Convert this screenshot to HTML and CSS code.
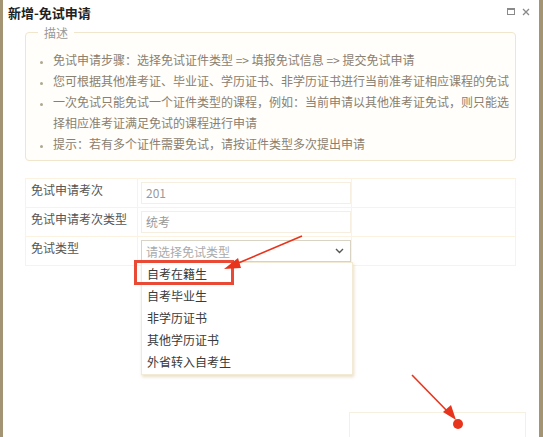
FILE: index.html
```html
<!DOCTYPE html>
<html lang="zh">
<head>
<meta charset="utf-8">
<title>新增-免试申请</title>
<link rel="stylesheet" href="styles.css">
</head>
<body>
<div class="window">
  <div class="titlebar">
    <span class="title">新增-免试申请</span>
    <span class="tools">
      <svg class="tool" width="8" height="8" viewBox="0 0 8 8"><rect x="0.5" y="0.5" width="7" height="6" fill="none" stroke="#8a8a8a" stroke-width="1"/><line x1="0.5" y1="1.5" x2="7.5" y2="1.5" stroke="#8a8a8a" stroke-width="1"/></svg>
      <svg class="tool" width="8" height="8" viewBox="0 0 8 8"><path d="M1 1 L7 7 M7 1 L1 7" stroke="#8a8a8a" stroke-width="1.3"/></svg>
    </span>
  </div>
  <div class="body">
    <fieldset class="desc">
      <legend>描述</legend>
      <ul>
        <li>免试申请步骤：选择免试证件类型 =&gt; 填报免试信息 =&gt; 提交免试申请</li>
        <li>您可根据其他准考证、毕业证、学历证书、非学历证书进行当前准考证相应课程的免试</li>
        <li>一次免试只能免试一个证件类型的课程，例如：当前申请以其他准考证免试，则只能选择相应准考证满足免试的课程进行申请</li>
        <li>提示：若有多个证件需要免试，请按证件类型多次提出申请</li>
      </ul>
    </fieldset>
    <div class="form">
      <div class="row">
        <div class="label">免试申请考次</div>
        <div class="value"><div class="input">201</div></div>
        <div class="extra"></div>
      </div>
      <div class="row">
        <div class="label">免试申请考次类型</div>
        <div class="value"><div class="input">统考</div></div>
        <div class="extra"></div>
      </div>
      <div class="row">
        <div class="label">免试类型</div>
        <div class="value">
          <div class="select">
            <span class="placeholder">请选择免试类型</span>
            <svg class="chev" width="9" height="6" viewBox="0 0 9 6"><path d="M1 1 L4.5 4.5 L8 1" fill="none" stroke="#555" stroke-width="1.4"/></svg>
          </div>
          <ul class="dropdown">
            <li>自考在籍生</li>
            <li>自考毕业生</li>
            <li>非学历证书</li>
            <li>其他学历证书</li>
            <li>外省转入自考生</li>
          </ul>
          <div class="highlight"></div>
        </div>
        <div class="extra"></div>
      </div>
    </div>
    <div class="footer">
      <div class="footbox"></div>
    </div>
  </div>
  <svg class="arrows" width="543" height="437" viewBox="0 0 543 437">
    <line x1="302" y1="236" x2="236" y2="264" stroke="#e8341c" stroke-width="1.6"/>
    <polygon points="224,269 238,258 241,268" fill="#e8341c"/>
    <line x1="412" y1="375" x2="450" y2="414" stroke="#e8341c" stroke-width="1.6"/>
    <polygon points="456,420 443,412 451,405" fill="#e8341c"/>
    <circle cx="458" cy="424" r="5" fill="#e8341c"/>
  </svg>
</div>
</body>
</html>
```
FILE: styles.css
```css
html, body {
  margin: 0;
  padding: 0;
  background: #fff;
}
body {
  font-family: "Noto Sans CJK SC", "Liberation Sans", sans-serif;
  font-size: 12px;
  color: #555;
}
.window {
  position: relative;
  width: 543px;
  height: 437px;
  box-sizing: border-box;
  border-left: 3px solid #a39473;
  border-right: 4px solid #a39473;
  background: #fff;
  overflow: hidden;
}
.titlebar {
  height: 24px;
  display: flex;
  align-items: center;
  justify-content: space-between;
  padding: 0 9px 0 5px;
}
.title {
  font-size: 13px;
  font-weight: bold;
  color: #222;
}
.tools {
  display: flex;
  gap: 7px;
  align-items: center;
}
.body {
  padding: 0 23px 0 22px;
}
.desc {
  margin: 0;
  border: 1px solid #f1e6cc;
  border-radius: 4px;
  padding: 8px 0 6px 0;
  background: #fffefb;
}
.desc legend {
  color: #999;
  margin-left: 12px;
  padding: 0 6px;
  font-size: 12px;
}
.desc ul {
  margin: 0;
  padding: 0 2px 0 27px;
  list-style: disc;
  color: #8a8070;
}
.desc li {
  line-height: 21px;
  white-space: nowrap;
}
.desc li::marker {
  color: #b0a890;
  font-size: 9px;
}
.desc li:nth-child(3) {
  white-space: normal;
}
.form {
  margin-top: 17px;
  border: 1px solid #fbf3e0;
}
.row {
  display: flex;
  height: 28px;
  border-bottom: 1px solid #fbf3e0;
}
.row:last-child { border-bottom: none; }
.label {
  width: 112px;
  padding-left: 5px;
  box-sizing: border-box;
  line-height: 22px;
  color: #555;
  font-size: 12px;
  border-right: 1px solid #fbf3e0;
}
.value {
  position: relative;
  width: 214px;
  padding: 3px 0 0 3px;
  box-sizing: border-box;
  border-right: 1px solid #fbf3e0;
}
.input {
  height: 20px;
  line-height: 20px;
  border: 1px solid #f6efe0;
  padding-left: 4px;
  color: #999;
  font-size: 12px;
}
.select {
  height: 20px;
  border: 1px solid #d9d3c4;
  display: flex;
  align-items: center;
  justify-content: space-between;
  padding: 0 6px 0 4px;
  background: #fff;
}
.placeholder {
  color: #aaa;
}
.dropdown {
  position: absolute;
  left: 3px;
  top: 25px;
  width: 210px;
  margin: 0;
  padding: 0 0 1px 0;
  list-style: none;
  background: #fff;
  box-shadow: 1px 2px 3px rgba(220, 200, 160, 0.6);
  border: 1px solid #f3ead6;
  z-index: 2;
}
.dropdown li {
  height: 22px;
  line-height: 22px;
  padding-left: 5px;
  color: #3a3a3a;
}
.highlight {
  position: absolute;
  left: -4px;
  top: 23px;
  width: 94px;
  height: 19px;
  border: 3px solid #e84a35;
  z-index: 3;
}
.extra {
  flex: 1;
}
.footer {
  display: flex;
  justify-content: flex-end;
  margin: 146px -10px 0 0;
}
.footbox {
  width: 175px;
  height: 30px;
  border: 1px solid #f6f0e0;
}
.arrows {
  position: absolute;
  left: -3px;
  top: 0;
  z-index: 5;
  pointer-events: none;
}
```
